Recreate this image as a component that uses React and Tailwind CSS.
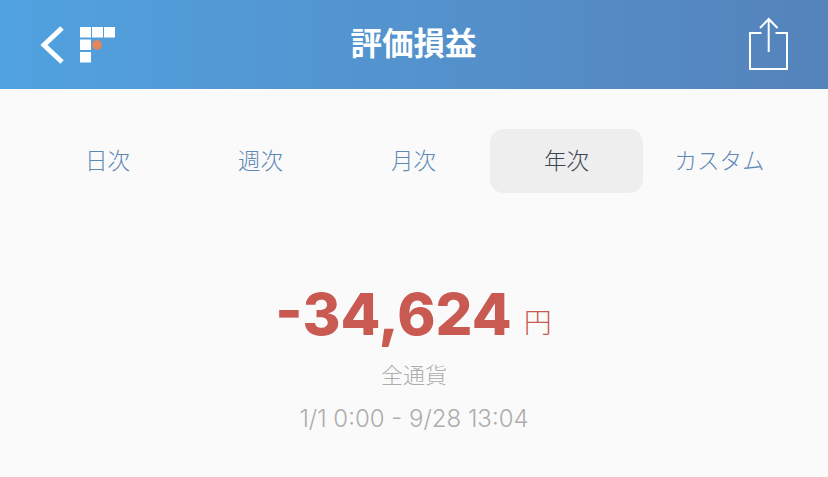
const jp = 'font-["Inter","Noto_Sans_CJK_JP",sans-serif]';

const tabs = ['日次', '週次', '月次', '年次', 'カスタム'];

function Logo() {
  return (
    <svg width="36" height="36" viewBox="0 0 36 36" className="ml-[14px]">
      <rect x="0" y="0" width="11" height="10.5" fill="#fff" />
      <rect x="12" y="0" width="11" height="10.5" fill="#fff" />
      <rect x="24" y="0" width="11" height="10.5" fill="#fff" />
      <rect x="0" y="12.5" width="11" height="10.5" fill="#fff" />
      <rect x="0" y="25" width="11" height="10.5" fill="#fff" />
      <circle cx="17" cy="18" r="5" fill="#e0875f" />
    </svg>
  );
}

export default function App() {
  return (
    <div className={`w-[828px] h-[477px] overflow-hidden bg-[#fafafa] ${jp}`}>
      <div className="h-[89px] bg-gradient-to-r from-[#50a2e0] to-[#5583bb] flex items-center justify-between relative">
        <div className="flex items-center pl-[40px]">
          <svg width="26" height="40" viewBox="0 0 26 40">
            <path d="M22 3 L4 20 L22 37" fill="none" stroke="#fff" strokeWidth="5" />
          </svg>
          <Logo />
        </div>
        <div className="absolute inset-x-0 text-center text-white text-[31.5px] font-bold leading-none top-[28px] pr-[1px]">
          評価損益
        </div>
        <svg width="40" height="54" viewBox="0 0 40 54" className="mr-[39px] mt-[-1px]">
          <path d="M12.5 16 H1 V52 H38 V16 H26.5" fill="none" stroke="#fff" strokeWidth="2" />
          <path d="M19.7 35 V2 M11 11 L19.7 2 L28.5 11" fill="none" stroke="#fff" strokeWidth="2" />
        </svg>
      </div>

      <div className="flex pl-[31px] mt-[40px] h-[64px]">
        {tabs.map((t) => (
          <div
            key={t}
            className={`w-[153px] flex items-center justify-center rounded-[14px] text-[22.5px] font-light ${
              t === '年次' ? 'bg-[#eeeeee] text-[#3c4452]' : 'text-[#5d87b5]'
            }`}
          >
            {t}
          </div>
        ))}
      </div>

      <div className="flex flex-col items-center mt-[86px]">
        <div className="flex items-baseline pr-[1px] h-[70px]">
          <span className="text-[58px] font-extrabold text-[#c95a51] leading-[70px]">-34,624</span>
          <span className="text-[28px] font-light text-[#c95a51] ml-[12px] leading-none -translate-y-[2px]">円</span>
        </div>
        <div className="text-[22px] font-light text-[#adadad] leading-none mt-[15px]">全通貨</div>
        <div className="text-[24px] text-[#adadad] leading-none mt-[21px] font-light">1/1 0:00 - 9/28 13:04</div>
      </div>
    </div>
  );
}
